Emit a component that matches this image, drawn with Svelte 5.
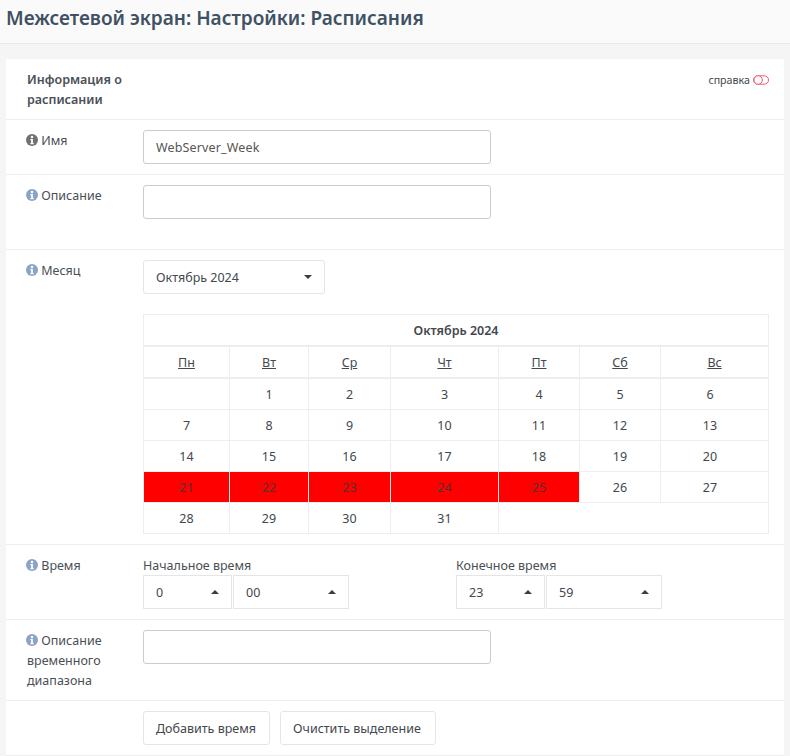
<script>
  const days = ['Пн','Вт','Ср','Чт','Пт','Сб','Вс'];
  const weeks = [
    ['',1,2,3,4,5,6],
    [7,8,9,10,11,12,13],
    [14,15,16,17,18,19,20],
    [21,22,23,24,25,26,27]
  ];
  const lastWeek = [28,29,30,31];
  const isRed = (d) => d >= 21 && d <= 25;
</script>

{#snippet info(dark)}
  <svg class="info" viewBox="0 0 16 16" width="12" height="12" aria-hidden="true">
    <circle cx="8" cy="8" r="8" fill={dark ? '#6f7175' : '#8aa3c7'} />
    <circle cx="8" cy="4" r="1.7" fill="#fff" />
    <path d="M5.8 6.6h3.4v5.4h1.1v1.6H5.8V12h1v-3.8h-1z" fill="#fff" />
  </svg>
{/snippet}

{#snippet caret()}
  <span class="caret-up"></span>
{/snippet}

<header class="title"><h1>Межсетевой экран: Настройки: Расписания</h1></header>

<main class="panel">
  <div class="row head">
    <div class="label strong">Информация о расписании</div>
    <div class="help">справка
      <svg viewBox="0 0 16 10" width="16" height="10" aria-hidden="true">
        <rect x="0.5" y="0.8" width="15" height="8.4" rx="4.2" fill="#fff" stroke="#ef5b6f" />
        <circle cx="5.2" cy="5" r="4.2" fill="#fff" stroke="#ef5b6f" />
      </svg>
    </div>
  </div>

  <div class="row r-name">
    <div class="label">{@render info(true)} Имя</div>
    <div class="field"><input class="text" value="WebServer_Week" /></div>
  </div>

  <div class="row r-desc">
    <div class="label">{@render info(false)} Описание</div>
    <div class="field"><input class="text" /></div>
  </div>

  <div class="row r-month">
    <div class="label">{@render info(false)} Месяц</div>
    <div class="field">
      <button class="select month">Октябрь 2024<span class="caret-down"></span></button>
      <table class="cal">
        <colgroup>
          <col class="c1" /><col class="c2" /><col class="c3" /><col class="c4" /><col class="c5" /><col class="c6" /><col class="c7" />
        </colgroup>
        <thead>
          <tr class="cap"><th colspan="7">Октябрь 2024</th></tr>
          <tr class="dow">
            {#each days as d}<th><u>{d}</u></th>{/each}
          </tr>
        </thead>
        <tbody>
          {#each weeks as w}
            <tr>
              {#each w as d}
                <td class:red={isRed(d)}>{d}</td>
              {/each}
            </tr>
          {/each}
          <tr>
            {#each lastWeek as d}<td>{d}</td>{/each}
            <td colspan="3"></td>
          </tr>
        </tbody>
      </table>
    </div>
  </div>

  <div class="row r-time">
    <div class="label">{@render info(false)} Время</div>
    <div class="field times">
      <div class="timegroup">
        <div class="tlabel">Начальное время</div>
        <div class="selects">
          <div class="tsel h">0{@render caret()}</div>
          <div class="tsel m">00{@render caret()}</div>
        </div>
      </div>
      <div class="timegroup">
        <div class="tlabel">Конечное время</div>
        <div class="selects">
          <div class="tsel h">23{@render caret()}</div>
          <div class="tsel m">59{@render caret()}</div>
        </div>
      </div>
    </div>
  </div>

  <div class="row r-tdesc">
    <div class="label">{@render info(false)} Описание временного диапазона</div>
    <div class="field"><input class="text" /></div>
  </div>

  <div class="row r-btn">
    <div class="label"></div>
    <div class="field btns">
      <button class="btn b1">Добавить время</button>
      <button class="btn b2">Очистить выделение</button>
    </div>
  </div>
</main>

<style>
  :global(body) {
    margin: 0;
    background: #f5f5f5;
    font-family: "Noto Sans", "Open Sans", sans-serif;
    font-size: 12.5px;
    color: #43484d;
  }
  .title {
    height: 43px;
    box-sizing: content-box;
    background: #fafafa;
    border-bottom: 1px solid #e8e8e8;
    overflow: hidden;
  }
  h1 {
    margin: 0;
    padding: 4px 0 0 6px;
    font-size: 19.05px;
    line-height: 28px;
    font-weight: 600;
    color: #3f5163;
    white-space: nowrap;
  }
  .panel {
    margin: 15px 6px 0 6px;
    background: #fff;
    height: 697px;
    overflow: hidden;
  }
  .row {
    display: flex;
    box-sizing: border-box;
    border-bottom: 1px solid #eee;
    padding: 10px 15px 0 21px;
    line-height: 20px;
  }
  .label {
    width: 116px;
    flex: none;
    color: #4a4f55;
    padding-top: 1px;
  }
  .strong { font-weight: 600; }
  .head { height: 61px; justify-content: space-between; }
  .help {
    font-size: 10.7px;
    display: flex;
    align-items: flex-start;
    gap: 3px;
    padding-top: 1px;
    color: #43484d;
  }
  .help svg { margin-top: 5px; }
  .r-name { height: 55px; }
  .r-desc { height: 75px; }
  .r-month { height: 295px; }
  .r-time { height: 75px; }
  .r-tdesc { height: 81px; }
  .r-btn { height: 55px; }
  .info { vertical-align: -1px; margin-left: -1px; }
  .text {
    display: block;
    box-sizing: border-box;
    width: 348px;
    height: 34px;
    padding: 1px 12px 0;
    border: 1px solid #ccc;
    border-radius: 3px;
    background: #fff;
    font: inherit;
    letter-spacing: 0.15px;
    color: #555;
    outline: none;
  }
  .select, .btn {
    box-sizing: border-box;
    height: 34px;
    background: #fff;
    border: 1px solid #e5e5e5;
    border-radius: 3px;
    font: inherit;
    color: #43484d;
    padding: 1px 12px 0;
    text-align: left;
  }
  .select {
    width: 182px;
    position: relative;
    display: block;
  }
  .caret-down {
    position: absolute;
    right: 12px;
    top: 14px;
    border-left: 4px solid transparent;
    border-right: 4px solid transparent;
    border-top: 4px solid #3d3d3d;
  }
  .caret-up {
    position: absolute;
    right: 12px;
    top: 14px;
    border-left: 4px solid transparent;
    border-right: 4px solid transparent;
    border-bottom: 4px solid #3d3d3d;
  }
  .cal {
    width: 625px;
    margin-top: 20px;
    border-collapse: collapse;
    table-layout: fixed;
    font-size: 12.5px;
  }
  .c1 { width: 86px; }
  .c2 { width: 79px; }
  .c3 { width: 82px; }
  .c4 { width: 108px; }
  .c5 { width: 81px; }
  .c6 { width: 81px; }
  .c7 { width: 108px; }
  .cal th, .cal td {
    border: 1px solid #eee;
    padding: 1px 0 0;
    text-align: center;
    color: #43484d;
  }
  .cal th { font-weight: 400; }
  .cap th { height: 29px; font-weight: 600; border-bottom-width: 2px; }
  .dow th { height: 29px; border-bottom-width: 2px; }
  .cal td { height: 29px; }
  .cal tbody td:nth-child(7) { padding-right: 9px; }
  .cal td.red { background: #f00; color: #553030; }
  .times { display: flex; }
  .timegroup { width: 313px; }
  .tlabel { line-height: 20px; margin-top: 1px; height: 19px; color: #4a4f55; }
  .selects { display: flex; gap: 1px; }
  .tsel {
    position: relative;
    box-sizing: border-box;
    height: 34px;
    line-height: 33px;
    border: 1px solid #e5e5e5;
    padding: 0 12px;
    color: #43484d;
  }
  .tsel.h { width: 89px; }
  .tsel.m { width: 116px; }
  .btns { display: flex; gap: 10px; }
  .btn.b1 { width: 127px; }
  .btn.b2 { width: 156px; }
</style>
